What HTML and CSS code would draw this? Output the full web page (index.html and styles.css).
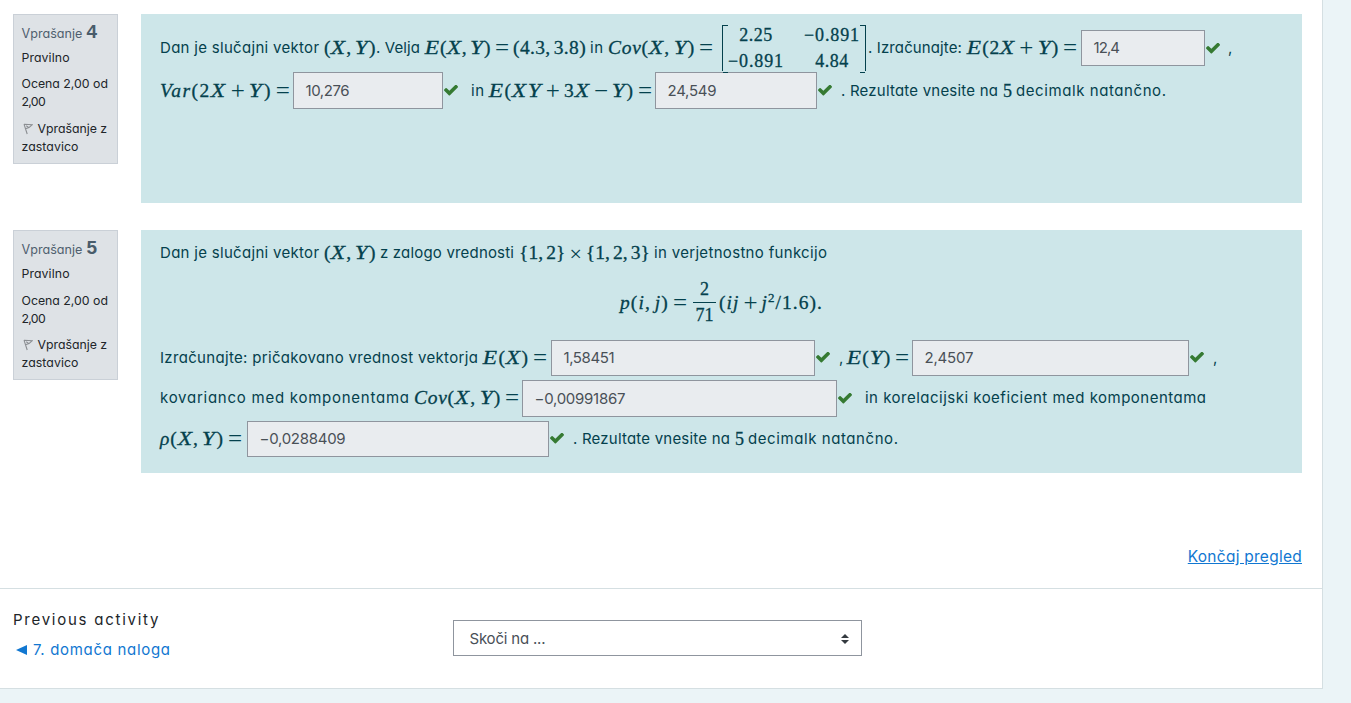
FILE: index.html
```html
<!DOCTYPE html>
<html lang="sl">
<head>
<meta charset="utf-8">
<title>Pregled kviza</title>
<link rel="stylesheet" href="styles.css">
</head>
<body>
<svg class="defs" width="0" height="0"><defs>
<symbol id="check" viewBox="121 434 1550 1090"><path d="M1671 566q0 40-28 68l-724 724-136 136q-28 28-68 28t-68-28l-136-136-362-362q-28-28-28-68t28-68l136-136q28-28 68-28t68 28l294 295 656-657q28-28 68-28t68 28l136 136q28 28 28 68z"/></symbol>
<symbol id="flag" viewBox="0 0 10 12"><path d="M1 1.2 4.2 11M1 1.2l8.2.5L6 4.6 2.5 5.8M3.2 2.8 6 4.6" fill="none" stroke="#8b8e92" stroke-width="1.1"/></symbol>
</defs></svg>
<main class="page">
  <section class="question q4">
    <aside class="info">
      <h3 class="no"><span>Vprašanje</span><b>4</b></h3>
      <p class="state">Pravilno</p>
      <p class="grade">Ocena 2,00 od<br><span class="l-two">2,00</span></p>
      <p class="flag"><svg class="flagicon"><use href="#flag"/></svg>Vprašanje z<br><span class="l-za">zastavico</span></p>
    </aside>
    <div class="content">
      <div class="row r1">
        <span class="l-dan">Dan je slučajni vektor</span>
        <span class="m l-xy">(<i>X</i>, <i>Y</i>)</span>
        <span class="l-velja">. Velja</span>
        <span class="m l-exy"><i>E</i>(<i>X</i>, <i>Y</i>)<span class="op">=</span>(4.3, 3.8)</span>
        <span class="l-in">in</span>
        <span class="m l-cov"><i class="s">Cov</i>(<i>X</i>, <i>Y</i>)<span class="op end">=</span></span>
        <span class="matrix m"><span class="cells"><span class="l-m1">2.25</span><span class="l-m2">−0.891</span><span class="l-m2">−0.891</span><span class="l-m1">4.84</span></span></span>
        <span class="l-izr">. Izračunajte:</span>
        <span class="m l-e2"><i>E</i>(2<i>X</i><span class="op">+</span><i>Y</i>)<span class="op end">=</span></span>
        <span class="field l-a1">12,4</span>
        <svg class="check"><use href="#check"/></svg>
        <span>,</span>
      </div>
      <div class="row r2">
        <span class="m l-var"><i class="s">Var</i>(2<i>X</i><span class="op">+</span><i>Y</i>)<span class="op end">=</span></span>
        <span class="field l-a2">10,276</span>
        <svg class="check"><use href="#check"/></svg>
        <span class="l-in">in</span>
        <span class="m l-exyt"><i>E</i>(<i>X</i><i>Y</i><span class="op">+</span>3<i>X</i><span class="op">−</span><i>Y</i>)<span class="op end">=</span></span>
        <span class="field l-a3">24,549</span>
        <svg class="check"><use href="#check"/></svg>
        <span class="l-rez">. Rezultate vnesite na</span>
        <span class="m five">5</span>
        <span class="l-dec">decimalk natančno.</span>
      </div>
    </div>
  </section>
  <section class="question q5">
    <aside class="info">
      <h3 class="no"><span>Vprašanje</span><b>5</b></h3>
      <p class="state">Pravilno</p>
      <p class="grade">Ocena 2,00 od<br><span class="l-two">2,00</span></p>
      <p class="flag"><svg class="flagicon"><use href="#flag"/></svg>Vprašanje z<br><span class="l-za">zastavico</span></p>
    </aside>
    <div class="content">
      <div class="row r3">
        <span class="l-dan">Dan je slučajni vektor</span>
        <span class="m l-xy">(<i>X</i>, <i>Y</i>)</span>
        <span class="l-zal">z zalogo vrednosti</span>
        <span class="m l-set">{1, 2}<span class="op times">×</span>{1, 2, 3}</span>
        <span class="l-ver">in verjetnostno funkcijo</span>
      </div>
      <div class="row r4 m">
        <span class="l-pij"><i class="s">p</i>(<i class="s">i</i>, <i class="s">j</i>)<span class="op end">=</span></span>
        <span class="frac"><span>2</span><span>71</span></span>
        <span class="l-ij">(<i class="s">ij</i><span class="op">+</span><i class="s">j</i><sup>2</sup>/1.6).</span>
      </div>
      <div class="row r5">
        <span class="l-pri">Izračunajte: pričakovano vrednost vektorja</span>
        <span class="m l-ex"><i>E</i>(<i>X</i>)<span class="op end">=</span></span>
        <span class="field l-a4">1,58451</span>
        <svg class="check"><use href="#check"/></svg>
        <span>,</span>
        <span class="m l-ey"><i>E</i>(<i>Y</i>)<span class="op end">=</span></span>
        <span class="field l-a5">2,4507</span>
        <svg class="check"><use href="#check"/></svg>
        <span>,</span>
      </div>
      <div class="row r6">
        <span class="l-kov">kovarianco med komponentama</span>
        <span class="m l-cov"><i class="s">Cov</i>(<i>X</i>, <i>Y</i>)<span class="op end">=</span></span>
        <span class="field l-a6">−0,00991867</span>
        <svg class="check"><use href="#check"/></svg>
        <span class="l-kor">in korelacijski koeficient med komponentama</span>
      </div>
      <div class="row r7">
        <span class="m l-rho"><i class="s">ρ</i>(<i>X</i>, <i>Y</i>)<span class="op end">=</span></span>
        <span class="field l-a6">−0,0288409</span>
        <svg class="check"><use href="#check"/></svg>
        <span class="l-rez">. Rezultate vnesite na</span>
        <span class="m five">5</span>
        <span class="l-dec">decimalk natančno.</span>
      </div>
    </div>
  </section>
  <div class="finish"><a href="#" class="l-kon">Končaj pregled</a></div>
  <footer class="nav">
    <div class="prev">
      <div class="label">Previous activity</div>
      <a href="#"><svg class="tri" viewBox="0 0 11 10"><path d="M0 5 11 0v10z"/></svg><span class="l-dom">7. domača naloga</span></a>
    </div>
    <div class="jump"><span>Skoči na ...</span><svg class="arrows" viewBox="0 0 8 10"><path d="M0 4 4 0l4 4zM0 6h8l-4 4z"/></svg></div>
  </footer>
</main>
</body>
</html>
```
FILE: styles.css
```css
* { box-sizing: border-box; }
body { margin: 0; height: 703px; overflow: hidden; background: #ebf4f7; font: 15px/18px Inter, "Open Sans", sans-serif; font-feature-settings: "cv11"; color: #212529; }
.defs { display: block; height: 0; }
.page { width: 1323px; height: 689px; background: #fff; border-right: 1px solid #d5dfe2; border-bottom: 1px solid #d5dfe2; padding-top: 14px; }

/* Question blocks */
.question { display: grid; grid-template-columns: 105px 1161px; column-gap: 23px; padding-left: 13px; align-items: start; }
.q4 { height: 216px; }
.q5 { height: 243px; }
.info { height: 150px; background: #dee2e6; border: 1px solid #cad0d7; padding: 8px 0 0 7.5px; font-size: 12.3px; white-space: nowrap; }
.info p { margin: 0; }
.no { margin: 0; height: 18px; display: flex; align-items: baseline; font-size: 12.6px; font-weight: 400; color: #4f5f6e; }
.no span { width: 65px; }
.no b { font-size: 19px; line-height: 18px; font-family: "Liberation Sans", sans-serif; color: #495c6b; }
.info .state { margin-top: 8px; letter-spacing: .1px; }
.info .grade { margin-top: 8px; }
.info .flag { margin-top: 9px; }
.q5 .grade { margin-top: 9px; }
.q5 .flag { margin-top: 8px; }
.flagicon { width: 10px; height: 12px; margin: 0 5px 0 1px; vertical-align: -2px; }
.content { background: #cde6e9; color: #04414d; padding: 11px 0 0 19px; }
.q4 .content { height: 189px; }
.q5 .content { height: 243px; padding-top: 12px; }

/* Formula rows */
.row { display: grid; align-items: center; white-space: nowrap; }
.m { font-family: "Liberation Serif", serif; font-size: 19.5px; -webkit-text-stroke: .3px #04414d; word-spacing: -2px; }
.m i { display: inline-block; transform: scaleX(1.2); margin: 0 1.5px 0 1.2px; }
.m i.s { transform: none; margin: 0; }
.op { display: inline-block; font-size: 25px; line-height: 0; margin: 0 4px; letter-spacing: 0; -webkit-text-stroke: 0; vertical-align: -2px; }
.op.end { margin-right: 0; }
.op.times { font-size: 22px; }
.r1 { height: 44px; grid-template-columns: 164px 52px 49px 165px 18px 113px 147px 99px 114px 125px 22px 10px; }
.r2 { height: 41px; margin-top: 1px; grid-template-columns: 133px 151px 27px 18px 166px 163px 23px 162px 13px 150px; }
.r3 { height: 21px; grid-template-columns: 164px 56px 139px 135px 173px; }
.r4 { height: 50px; margin-top: 14px; padding-left: 460px; grid-template-columns: 73px 26px 104px; }
.r5 { height: 41px; margin-top: 10px; grid-template-columns: 323px 68px 265px 23px 8px 65px 278px 23px 8px; }
.r6 { height: 40px; grid-template-columns: 254px 108px 316px 27px 341px; }
.r7 { height: 41px; grid-template-columns: 87px 303px 23px 162px 13px 150px; }
.field { height: 36px; margin-right: 1px; background: #e9ecef; border: 1px solid #8f959e; color: #495057; padding: 8px 0 0 11.5px; }
.r2 .field, .r6 .field { height: 37px; padding-top: 9px; }
.check { width: 14px; height: 11px; fill: #357a32; }
.matrix { position: relative; height: 46px; width: 144px; border: solid #04414d; border-width: 0 1.5px; margin-left: .5px; }
.matrix::before, .matrix::after { content: ""; position: absolute; left: 0; top: 0; width: 5px; height: 46px; border: solid #04414d; border-width: 1px 0; }
.matrix::after { left: auto; right: 0; }
.cells { display: grid; grid-template-columns: 56px 56px; column-gap: 20px; margin-left: 5.5px; margin-top: -3.5px; grid-auto-rows: 26px; align-items: center; justify-items: center; font-size: 18px; line-height: 16px; }
.five { font-size: 18px; }
.frac { display: grid; width: 23px; text-align: center; font-size: 18px; line-height: 25px; }
.frac span + span { border-top: 1px solid #04414d; }
sup { font-size: 13px; line-height: 0; }

/* Tracking of individual runs */
.l-two { letter-spacing: -.7px; }
.l-za { letter-spacing: .08px; }
.l-dan { letter-spacing: .3px; }
.l-xy { letter-spacing: .52px; }
.l-velja { letter-spacing: .11px; }
.l-exy { letter-spacing: .35px; }
.l-in { letter-spacing: .5px; }
.l-cov { letter-spacing: .73px; }
.l-m1 { letter-spacing: .5px; }
.l-m2 { letter-spacing: .87px; }
.l-izr { letter-spacing: .12px; }
.l-e2 { letter-spacing: .71px; }
.l-a1 { letter-spacing: -.9px; }
.l-a2 { letter-spacing: -.44px; }
.l-a3, .l-a6 { letter-spacing: -.27px; }
.l-a4 { letter-spacing: -.42px; }
.l-a5 { letter-spacing: -.19px; }
.l-var { letter-spacing: 1.47px; }
.l-exyt { letter-spacing: .88px; }
.l-rez { letter-spacing: .21px; }
.l-dec { letter-spacing: .58px; }
.l-zal { letter-spacing: .18px; }
.l-set { letter-spacing: .07px; }
.l-ver { letter-spacing: .32px; }
.l-pij { letter-spacing: 1.08px; }
.l-ij { letter-spacing: 1.04px; }
.l-pri { letter-spacing: .32px; }
.l-ex { letter-spacing: .92px; }
.l-ey { letter-spacing: .68px; }
.l-kov { letter-spacing: .75px; }
.l-kor { letter-spacing: .49px; }
.l-rho { letter-spacing: .8px; }
.l-kon { letter-spacing: .26px; }
.l-dom { letter-spacing: .69px; }

/* Footer */
a { color: #1177d1; }
.finish { height: 115px; padding: 75px 20px 0 0; text-align: right; font-size: 15.5px; }
.nav { height: 100px; border-top: 1px solid #d5dfe2; display: grid; grid-template-columns: 440px 409px; padding: 22px 0 0 13px; }
.label { height: 30px; letter-spacing: 1.75px; }
.prev a { text-decoration: none; margin-left: 3px; }
.tri { width: 11px; height: 10px; fill: #1177d1; margin-right: 6px; }
.jump { height: 36px; margin-top: 9px; border: 1px solid #8f959e; display: flex; align-items: center; justify-content: space-between; padding: 1px 12px 0 15.5px; color: #495057; letter-spacing: -.2px; }
.arrows { width: 8px; height: 10px; fill: #343a40; }
```
